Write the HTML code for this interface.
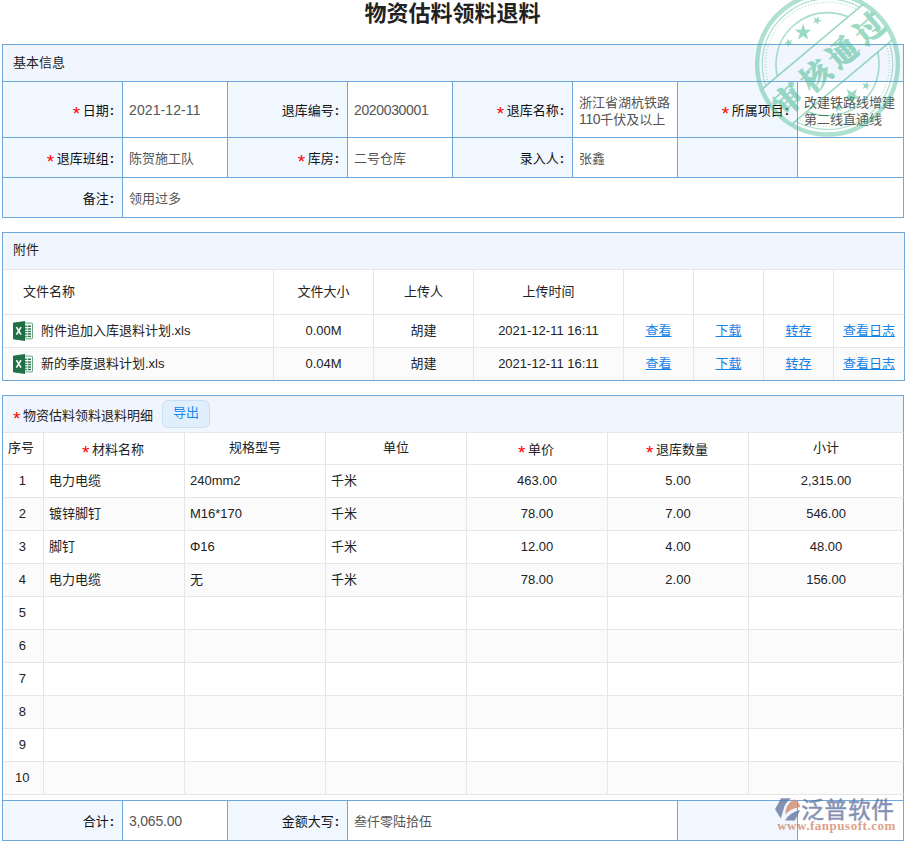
<!DOCTYPE html>
<html lang="zh-CN">
<head>
<meta charset="utf-8">
<title>物资估料领料退料</title>
<style>
*{box-sizing:border-box;margin:0;padding:0}
html,body{width:905px;height:842px;background:#fff;overflow:hidden}
body{position:relative;font-family:"Liberation Sans","Noto Sans CJK SC",sans-serif;font-size:13px;color:#333}
.title{position:absolute;left:0;top:0;width:905px;height:30px;line-height:28px;text-align:center;font-size:22px;font-weight:bold;color:#222;letter-spacing:0}
table{border-collapse:separate;border-spacing:0;table-layout:fixed;position:absolute;left:2px;width:902px}
td,th{font-weight:normal;overflow:hidden;white-space:nowrap;vertical-align:middle}
.red{color:#f00;font-size:19px;line-height:1px;position:relative;top:5px;margin-right:-1px}
.lb i{font-style:normal;margin-left:1px;font-weight:bold}
/* section 1 */
.t1{top:44px;border-left:1px solid #6ea8da;border-top:1px solid #6ea8da}
.t1 td{border-right:1px solid #6ea8da;border-bottom:1px solid #6ea8da}
.t1 .hd{height:37px;background:#f1f6fe;padding-left:10px;padding-bottom:4px;color:#222}
.t1 .lb{background:#f0f7ff;text-align:right;padding-right:8px;color:#111}
.t1 .vl{background:#fff;padding-left:6px;color:#555}
.t1 .wrap{white-space:normal;line-height:17px;padding-top:3px}

.num{font-size:14px;letter-spacing:0.1px}
/* section 2 */
.t2{top:232px;border-left:1px solid #6ea8da;border-top:1px solid #6ea8da;border-bottom:1px solid #6ea8da}
.t2 td{border-right:1px solid #e6e6e6;border-bottom:1px solid #e6e6e6;text-align:center;color:#222}
.t2 td:last-child{border-right:1px solid #6ea8da}
.t2 .hd{height:37px;background:#f1f6fe;padding-left:10px;padding-bottom:6px;text-align:left}
.t2 .ch td{height:45px;padding-bottom:3px}
.t2 .r td{height:33px;padding-bottom:2px}
.t2 .r.last td{height:32px;border-bottom:none;padding-bottom:1px}
.t2 .alt td{background:#fbfbfb}
.t2 .r .fn{text-align:left;padding-left:38px;position:relative;padding-bottom:4px}
.t2 .r.last .fn{padding-bottom:3px}
.t2 .fn svg{position:absolute;left:10px;top:6px}
.t2 a{color:#1782e6;text-decoration:underline}
.t2 .r td:nth-child(3),.t2 .r td:nth-child(n+5){padding-bottom:4px}
.t2 .r.last td:nth-child(3),.t2 .r.last td:nth-child(n+5){padding-bottom:3px}
/* section 3 */
.t3{top:395px;border-left:1px solid #6ea8da;border-top:1px solid #6ea8da}
.t3 td{border-right:1px solid #e6e6e6;border-bottom:1px solid #e6e6e6;text-align:center;color:#222}
.t3 td:last-child{border-right:1px solid #6ea8da}
.t3 .hd{height:37px;background:#f1f6fe;padding-left:10px;padding-top:0px;text-align:left;position:relative}
.t3 .ch td{height:32px;padding-bottom:4px}
.t3 .ch td.s{padding-bottom:1px;padding-right:2px}
.t3 .ch td:first-child{padding-right:4px;padding-bottom:5px}
.t3 .r td{height:33px;padding-bottom:2px}
.t3 .alt td{background:#fbfbfb}
.t3 .r td:first-child{padding-right:1.4px}
.t3 td.l{text-align:left;padding-left:5px;padding-bottom:4px}
.t3 td.l.a{padding-bottom:2px}
.btn{position:absolute;left:159px;top:4px;width:48px;height:28px;line-height:24px;border:1px solid #c9dff5;border-radius:6px;background:#e1effc;color:#1885f2;text-align:center;font-size:13px}
.gap{position:absolute;left:2px;top:795px;width:902px;height:5px;border-left:1px solid #6ea8da;border-right:1px solid #6ea8da}
.t4{top:800px;border-left:1px solid #6ea8da;border-top:1px solid #6ea8da}
.t4 td{height:40px;border-right:1px solid #6ea8da;border-bottom:1px solid #6ea8da}
.t4 .lb{background:#f0f7ff;text-align:right;padding-right:8px;color:#111}
.t4 .vl{background:#fff;padding-left:6px;color:#555}
</style>
</head>
<body>
<div class="title">物资估料领料退料</div>

<table class="t1">
<colgroup><col style="width:120px"><col style="width:105px"><col style="width:120px"><col style="width:105px"><col style="width:120px"><col style="width:105px"><col style="width:120px"><col style="width:106px"></colgroup>
<tr><td class="hd" colspan="8">基本信息</td></tr>
<tr style="height:56px"><td class="lb"><span class="red">*</span> 日期<i>:</i></td><td class="vl"><span class="num">2021-12-11</span></td><td class="lb">退库编号<i>:</i></td><td class="vl"><span class="num" style="letter-spacing:-0.35px">2020030001</span></td><td class="lb"><span class="red">*</span> 退库名称<i>:</i></td><td class="vl wrap">浙江省湖杭铁路<span class="num" style="letter-spacing:-0.35px">110</span>千伏及以上</td><td class="lb"><span class="red">*</span> 所属项目<i>:</i></td><td class="vl wrap">改建铁路线增建第二线直通线</td></tr>
<tr style="height:40px"><td class="lb"><span class="red">*</span> 退库班组<i>:</i></td><td class="vl">陈贺施工队</td><td class="lb"><span class="red">*</span> 库房<i>:</i></td><td class="vl">二号仓库</td><td class="lb">录入人<i>:</i></td><td class="vl">张鑫</td><td class="lb"></td><td class="vl"></td></tr>
<tr style="height:40px"><td class="lb">备注<i>:</i></td><td class="vl" colspan="7">领用过多</td></tr>
</table>

<table class="t2">
<colgroup><col style="width:271px"><col style="width:100px"><col style="width:100px"><col style="width:150px"><col style="width:70px"><col style="width:70px"><col style="width:70px"><col style="width:71px"></colgroup>
<tr><td class="hd" colspan="8">附件</td></tr>
<tr class="ch"><td style="text-align:left;padding-left:20px">文件名称</td><td>文件大小</td><td>上传人</td><td>上传时间</td><td></td><td></td><td></td><td></td></tr>
<tr class="r "><td class="fn"><svg width="20" height="20" viewBox="0 0 20 20"><rect x="11.5" y="2.1" width="8" height="15.8" rx="0.8" fill="#fff" stroke="#5a9a78" stroke-width="0.9"/><path d="M12 5.3h1.7M12 7.9h1.7M12 10.4h1.7M12 13h1.7M12 15.5h1.7" stroke="#2b7a50" stroke-width="1.5" fill="none"/><path d="M14.6 5.3h3.4M14.6 7.9h3.4M14.6 10.4h3.4M14.6 13h3.4M14.6 15.5h3.4" stroke="#2b7a50" stroke-width="1.5" fill="none"/><path d="M0 1.8L12 0v20L0 18.2z" fill="#1f7145"/><path d="M3.4 6.2l4.6 7.4M8 6.2l-4.6 7.4" stroke="#fff" stroke-width="1.6" fill="none"/></svg>附件追加入库退料计划.xls</td><td>0.00M</td><td>胡建</td><td>2021-12-11 16:11</td><td><a>查看</a></td><td><a>下载</a></td><td><a>转存</a></td><td><a>查看日志</a></td></tr>
<tr class="r alt last"><td class="fn"><svg width="20" height="20" viewBox="0 0 20 20"><rect x="11.5" y="2.1" width="8" height="15.8" rx="0.8" fill="#fff" stroke="#5a9a78" stroke-width="0.9"/><path d="M12 5.3h1.7M12 7.9h1.7M12 10.4h1.7M12 13h1.7M12 15.5h1.7" stroke="#2b7a50" stroke-width="1.5" fill="none"/><path d="M14.6 5.3h3.4M14.6 7.9h3.4M14.6 10.4h3.4M14.6 13h3.4M14.6 15.5h3.4" stroke="#2b7a50" stroke-width="1.5" fill="none"/><path d="M0 1.8L12 0v20L0 18.2z" fill="#1f7145"/><path d="M3.4 6.2l4.6 7.4M8 6.2l-4.6 7.4" stroke="#fff" stroke-width="1.6" fill="none"/></svg>新的季度退料计划.xls</td><td>0.04M</td><td>胡建</td><td>2021-12-11 16:11</td><td><a>查看</a></td><td><a>下载</a></td><td><a>转存</a></td><td><a>查看日志</a></td></tr>
</table>

<table class="t3">
<colgroup><col style="width:41px"><col style="width:141px"><col style="width:141px"><col style="width:141px"><col style="width:141px"><col style="width:141px"><col style="width:155px"></colgroup>
<tr><td class="hd" colspan="7"><span class="red">*</span> 物资估料领料退料明细<span class="btn">导出</span></td></tr>
<tr class="ch"><td>序号</td><td class="s"><span class="red">*</span> 材料名称</td><td>规格型号</td><td>单位</td><td class="s"><span class="red">*</span> 单价</td><td class="s"><span class="red">*</span> 退库数量</td><td>小计</td></tr>
<tr class="r "><td>1</td><td class="l">电力电缆</td><td class="l a">240mm2</td><td class="l">千米</td><td>463.00</td><td>5.00</td><td>2,315.00</td></tr>
<tr class="r alt"><td>2</td><td class="l">镀锌脚钉</td><td class="l a">M16*170</td><td class="l">千米</td><td>78.00</td><td>7.00</td><td>546.00</td></tr>
<tr class="r "><td>3</td><td class="l">脚钉</td><td class="l a">Φ16</td><td class="l">千米</td><td>12.00</td><td>4.00</td><td>48.00</td></tr>
<tr class="r alt"><td>4</td><td class="l">电力电缆</td><td class="l">无</td><td class="l">千米</td><td>78.00</td><td>2.00</td><td>156.00</td></tr>
<tr class="r "><td>5</td><td></td><td></td><td></td><td></td><td></td><td></td></tr>
<tr class="r alt"><td>6</td><td></td><td></td><td></td><td></td><td></td><td></td></tr>
<tr class="r "><td>7</td><td></td><td></td><td></td><td></td><td></td><td></td></tr>
<tr class="r alt"><td>8</td><td></td><td></td><td></td><td></td><td></td><td></td></tr>
<tr class="r "><td>9</td><td></td><td></td><td></td><td></td><td></td><td></td></tr>
<tr class="r alt"><td>10</td><td></td><td></td><td></td><td></td><td></td><td></td></tr>
</table>
<div class="gap"></div>
<table class="t4">
<colgroup><col style="width:120px"><col style="width:105px"><col style="width:120px"><col style="width:330px"><col style="width:120px"><col style="width:106px"></colgroup>
<tr><td class="lb">合计<i>:</i></td><td class="vl"><span class="num" style="letter-spacing:-0.2px">3,065.00</span></td><td class="lb">金额大写<i>:</i></td><td class="vl">叁仟零陆拾伍</td><td class="lb"></td><td class="vl"></td></tr>
</table>

<svg class="stamp" width="905" height="160" viewBox="0 0 905 160" style="position:absolute;left:0;top:0;opacity:.52">
<defs><clipPath id="ob"><rect x="-80" y="-80" width="160" height="57"/><rect x="-80" y="23" width="160" height="57"/></clipPath></defs>
<g transform="translate(827.5,64.2) rotate(-40)" stroke="#3fb88c" fill="none">
<circle r="70.3" stroke-width="4.4" opacity=".8"/>
<g clip-path="url(#ob)" opacity=".85">
<circle r="65.2" stroke-width="1.1"/>
<circle r="62" stroke-width="1.2" stroke-dasharray="1 2"/>
<circle r="51.5" stroke-width="1.6"/>
</g>
<path d="M-66.5 -23H66.5M-66.5 23H66.5" stroke-width="1.6"/>
<g fill="#3fb88c" stroke="none"><polygon points="-14.53,-45.67 -14.38,-42.38 -11.24,-41.38 -14.32,-40.22 -14.30,-36.93 -16.36,-39.50 -19.49,-38.46 -17.68,-41.22 -19.63,-43.87 -16.45,-43.00"/><polygon points="14.53,45.67 14.38,42.38 11.24,41.38 14.32,40.22 14.30,36.93 16.36,39.50 19.49,38.46 17.68,41.22 19.63,43.87 16.45,43.00"/><polygon points="7.27,-46.55 5.08,-40.79 9.72,-36.74 3.57,-37.04 1.14,-31.38 -0.47,-37.33 -6.60,-37.88 -1.44,-41.25 -2.81,-47.26 1.98,-43.39"/><polygon points="-7.27,46.55 -5.08,40.79 -9.72,36.74 -3.57,37.04 -1.14,31.38 0.47,37.33 6.60,37.88 1.44,41.25 2.81,47.26 -1.98,43.39"/><polygon points="24.21,-42.29 21.89,-39.95 23.27,-36.96 20.33,-38.45 17.92,-36.21 18.43,-39.47 15.55,-41.07 18.80,-41.60 19.44,-44.83 20.94,-41.90"/><polygon points="-24.21,42.29 -21.89,39.95 -23.27,36.96 -20.33,38.45 -17.92,36.21 -18.43,39.47 -15.55,41.07 -18.80,41.60 -19.44,44.83 -20.94,41.90"/></g>
<text transform="rotate(-1.4 56 0)" x="4.3" y="10.5" text-anchor="middle" font-family="'Noto Serif CJK SC','Liberation Serif',serif" font-weight="900" font-size="30" letter-spacing="5.8" fill="#3fb88c" stroke="#3fb88c" stroke-width="0.65" stroke-linejoin="round">审核通过</text>
</g>
</svg>

<svg class="logo" width="140" height="52" viewBox="765 790 140 52" style="position:absolute;left:765px;top:790px;opacity:.8">
<path d="M781.1 798.2H791.3Q785.6 802.5 784.4 806.6L780.8 818.6L775 809.3Z" fill="#6578a0"/>
<path d="M794.3 799.2Q799.2 801.8 800.2 806.9Q790.5 808 785.4 814.8Q784.6 804.6 794.3 799.2Z" fill="#d38a6e"/>
<path d="M800.2 810.1L794.9 820.6H785Q789.5 812.6 800.2 810.1Z" fill="#6578a0"/>
<text x="801.3" y="818.2" font-family="'Liberation Sans','Noto Sans CJK SC',sans-serif" font-size="22.6" letter-spacing="0.7" fill="#6578a0" stroke="#6578a0" stroke-width="0.5">泛普软件</text>
<text x="777.2" y="830.2" font-family="'Liberation Serif',serif" font-weight="bold" font-size="13" letter-spacing="0.52" fill="#d38a6e">www.fanpusoft.com</text>
</svg>
</body>
</html>
